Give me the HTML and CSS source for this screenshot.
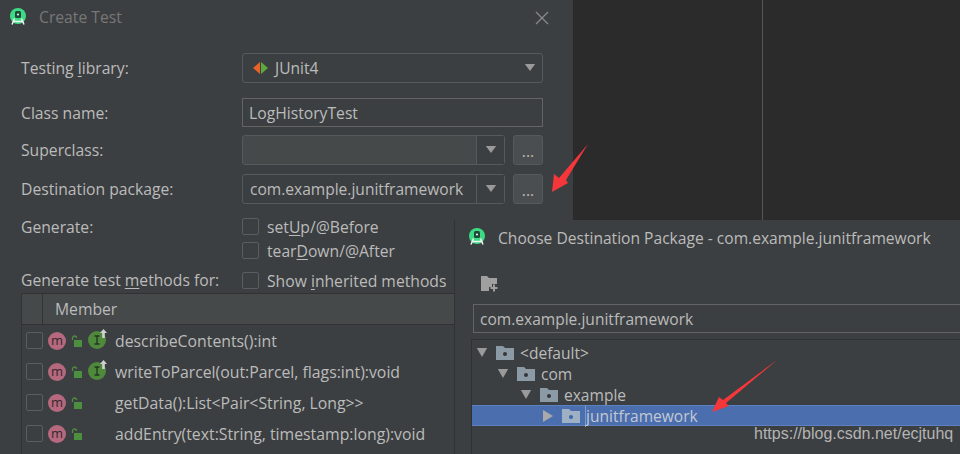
FILE: index.html
```html
<!DOCTYPE html>
<html lang="en">
<head>
<meta charset="utf-8">
<title>Create Test</title>
<link rel="stylesheet" href="styles.css">
</head>
<body>
<svg width="0" height="0" class="defs">
  <defs>
    <symbol id="as" viewBox="0 0 18 18">
      <circle cx="9" cy="8" r="8" fill="#3ddc84"/>
      <rect x="6" y="3" width="6" height="7" rx="1.5" fill="#1f4a3a"/>
      <circle cx="9" cy="6.5" r="1.1" fill="#d8f5e5"/>
      <path d="M5.5 10.5 3 16.5M12.5 10.5 15 16.5M4.5 13.5h9" stroke="#f2f2f2" stroke-width="1.5" fill="none"/>
    </symbol>
    <symbol id="tri" viewBox="0 0 14 9" preserveAspectRatio="none"><path d="M1 0h12l-6 8z" fill="#9a9a9a"/></symbol>
    <symbol id="lock" viewBox="0 0 11 12">
      <path d="M1.5 5V3a2 2 0 0 1 4 0" stroke="#4c8f3f" stroke-width="1.3" fill="none"/>
      <rect x="3" y="5" width="8" height="7" fill="#4c8f3f"/>
    </symbol>
    <symbol id="iface" viewBox="0 0 19 20">
      <circle cx="9" cy="11" r="9" fill="#4f8a3c"/>
      <path d="M6.500 7h5M6.500 15h5M9 7v8" stroke="#23351f" stroke-width="1.300" fill="none"/>
      <path d="M15.500 0l3.500 4h-2.200v5h-2.600v-5h-2.200z" fill="#d0d0d0"/>
    </symbol>
    <symbol id="pkg" viewBox="0 0 18 14">
      <path d="M0 0h7l2 2h9v12H0z" fill="#8c9aa5"/>
      <circle cx="9" cy="8" r="2" fill="#33373a"/>
    </symbol>
    <symbol id="pkgsel" viewBox="0 0 18 14">
      <path d="M0 0h7l2 2h9v12H0z" fill="#9eb0c4"/>
      <circle cx="9" cy="8" r="2" fill="#3f64a8"/>
    </symbol>
  </defs>
</svg>

<main class="desktop">
  <span class="backline"></span>

  <section class="window create">
    <header class="titlebar">
      <svg class="appicon"><use href="#as"/></svg>
      <span class="title-dim">Create Test</span>
      <svg class="close" viewBox="0 0 14 14"><path d="M1 1l12 12M13 1L1 13" stroke="#8a8a8a" stroke-width="1.2" fill="none"/></svg>
    </header>

    <div class="form">
      <div class="frow h30">
        <label class="lbl">Testing <u>l</u>ibrary:</label>
        <div class="select">
          <svg class="junit" viewBox="0 0 15 12"><path d="M7 0v12L0 6z" fill="#e8622a"/><path d="M8 0v12L15 6z" fill="#5fa83d"/></svg>
          <span class="grow">JUnit4</span>
          <svg class="tri"><use href="#tri"/></svg>
        </div>
      </div>
      <div class="frow h29 gap15">
        <label class="lbl">Class name:</label>
        <div class="field">LogHistoryTest</div>
      </div>
      <div class="frow h30 gap8">
        <label class="lbl">Superclass:</label>
        <div class="picker">
          <div class="combo empty"><span class="grow"></span><span class="drop"><svg class="tri"><use href="#tri"/></svg></span></div>
          <button class="dots">...</button>
        </div>
      </div>
      <div class="frow h30 gap9">
        <label class="lbl">Destination package:</label>
        <div class="picker">
          <div class="combo"><span class="grow">com.example.junitframework</span><span class="drop"><svg class="tri"><use href="#tri"/></svg></span></div>
          <button class="dots">...</button>
        </div>
      </div>
    </div>

    <div class="generate">
      <span class="lbl">Generate:</span>
      <div class="checks">
        <div class="check"><i class="box"></i><span>set<u>U</u>p/@Before</span></div>
        <div class="check"><i class="box"></i><span>tear<u>D</u>own/@After</span></div>
      </div>
    </div>

    <div class="methods">
      <span class="lbl">Generate test <u>m</u>ethods for:</span>
      <div class="check"><i class="box"></i><span>Show <u>i</u>nherited methods</span></div>
    </div>

    <div class="table">
      <div class="thead"><span class="th-check"></span><span class="th-member">Member</span></div>
      <div class="row"><i class="box"></i><span class="badge">m</span><svg class="lock"><use href="#lock"/></svg><svg class="iface"><use href="#iface"/></svg><span class="sig">describeContents():int</span></div>
      <div class="row"><i class="box"></i><span class="badge">m</span><svg class="lock"><use href="#lock"/></svg><svg class="iface"><use href="#iface"/></svg><span class="sig">writeToParcel(out:Parcel, flags:int):void</span></div>
      <div class="row"><i class="box"></i><span class="badge">m</span><svg class="lock"><use href="#lock"/></svg><span class="noiface"></span><span class="sig">getData():List&lt;Pair&lt;String, Long&gt;&gt;</span></div>
      <div class="row"><i class="box"></i><span class="badge">m</span><svg class="lock"><use href="#lock"/></svg><span class="noiface"></span><span class="sig">addEntry(text:String, timestamp:long):void</span></div>
    </div>
  </section>

  <section class="window choose">
    <header class="titlebar2">
      <svg class="appicon"><use href="#as"/></svg>
      <span>Choose Destination Package - com.example.junitframework</span>
    </header>
    <div class="toolbar">
      <svg class="newpkg" viewBox="0 0 18 16"><path d="M0 0h6l2 2h8v6h-5v3H8v4H0z" fill="#a0a0a0"/><path d="M13 8.500v7M9.500 12h7" stroke="#a0a0a0" stroke-width="2" fill="none"/></svg>
    </div>
    <div class="pkgfield">com.example.junitframework</div>
    <div class="tree">
      <div class="node l0"><svg class="tw"><use href="#tri"/></svg><svg class="folder"><use href="#pkg"/></svg><span>&lt;default&gt;</span></div>
      <div class="node l1"><svg class="tw"><use href="#tri"/></svg><svg class="folder"><use href="#pkg"/></svg><span>com</span></div>
      <div class="node l2"><svg class="tw"><use href="#tri"/></svg><svg class="folder"><use href="#pkg"/></svg><span>example</span></div>
      <div class="node l3 selected"><svg class="tw closed" viewBox="0 0 12 12"><path d="M1 0l10 6-10 6z" fill="#a9a9a9"/></svg><svg class="folder"><use href="#pkgsel"/></svg><span class="focus">junitframework</span></div>
    </div>
  </section>

  <svg class="arrow-layer" viewBox="0 0 960 454">
    <path d="M588 144 566 180 568 183 552 192 554 174 559 178z" fill="#f5363a"/>
    <path d="M777 360 726 403 729 406 712 412 719 397 723 400z" fill="#f5363a"/>
  </svg>
  <span class="watermark">https://blog.csdn.net/ecjtuhq</span>
</main>
</body>
</html>
```
FILE: styles.css
```css
* { box-sizing: border-box; }
html, body { margin: 0; padding: 0; }
body { width: 960px; height: 454px; overflow: hidden; background: #2b2b2b; font-family: "Open Sans", "Noto Sans", sans-serif; font-size: 15.700px; color: #bbbbbb; }
.defs { position: absolute; }
.desktop { position: relative; width: 960px; height: 454px; overflow: hidden; }
.backline { position: absolute; left: 762px; top: 0; width: 1px; height: 220px; background: #555555; }
.window { position: absolute; background: #3c3f41; overflow: hidden; }
.create { left: 0; top: 0; width: 573px; height: 454px; }
.choose { left: 454px; top: 220px; width: 506px; height: 234px; border-left: 1px solid #2f3132; }

.titlebar { height: 53px; display: flex; align-items: flex-start; padding: 8px 24px 0 9px; }
.appicon { width: 18px; height: 18px; flex: none; }
.title-dim { margin-left: 12px; color: #777777; line-height: 19px; flex: 1; }
.close { width: 14px; height: 14px; margin-top: 3px; }

.form { padding-left: 21px; }
.frow { display: flex; }
.h30 { height: 30px; }
.h29 { height: 29px; }
.gap15 { margin-top: 15px; }
.gap8 { margin-top: 8px; }
.gap9 { margin-top: 9px; }
.lbl { display: flex; align-items: center; white-space: pre; width: 221px; flex: none; }
.lbl u { text-underline-offset: 2px; }

.select { width: 301px; display: flex; align-items: center; border: 1.500px solid #565a5c; border-radius: 3px; padding: 0 6px 0 10px; }
.junit { width: 15px; height: 12px; margin-right: 7px; flex: none; }
.grow { flex: 1; white-space: nowrap; font-size: 15.550px; }
.tri { width: 12px; height: 8px; display: block; }
.field { width: 301px; border: 1.500px solid #646464; padding: 0 6px; display: flex; align-items: center; }
.picker { display: flex; gap: 8px; width: 301px; }
.combo { width: 263px; display: flex; align-items: center; border: 1.500px solid #565a5c; border-radius: 3px; padding-left: 7px; }
.combo.empty { background: #45494a; padding-left: 0; }
.drop { width: 28px; height: 100%; border-left: 1.500px solid #565a5c; background: #3c3f41; display: flex; align-items: center; justify-content: center; flex: none; }
.dots { width: 30px; height: 30px; padding: 0 0 4px; border: 1.500px solid #55595b; border-radius: 3px; background: #4a4e50; color: #bbbbbb; font: inherit; line-height: 1; display: flex; align-items: flex-end; justify-content: center; }

.generate { display: flex; margin-top: 12px; padding-left: 21px; }
.generate > .lbl { height: 22px; }
.checks { display: flex; flex-direction: column; gap: 4px; }
.check { display: flex; align-items: center; height: 20px; white-space: nowrap; }
.check span { padding-top: 2px; }
.check u { text-underline-offset: 2px; }
.box { width: 17px; height: 17px; border: 1.500px solid #5a5e60; border-radius: 2px; background: #3c3f41; display: block; flex: none; margin-right: 8px; }

.methods { display: flex; margin-top: 10px; padding-left: 21px; height: 20px; }

.table { margin: 3px 0 0 21px; border: 1px solid #323232; border-right: 0; height: 170px; }
.thead { height: 31px; display: flex; align-items: center; background: #45494a; border-bottom: 1px solid #323232; }
.th-check { width: 21px; height: 100%; border-right: 1px solid #323232; flex: none; }
.th-member { margin-left: 12px; }
.row { height: 31px; display: flex; align-items: center; padding-left: 4px; white-space: nowrap; }
.row .box { margin-right: 5px; }
.badge { width: 18px; height: 18px; border-radius: 50%; background: #b5687e; color: #33282b; font-size: 13px; line-height: 17px; text-align: center; flex: none; margin-right: 5px; }
.lock { width: 11px; height: 12px; flex: none; }
.iface { width: 19px; height: 20px; margin: -3px 0 0 6px; flex: none; }
.noiface { width: 19px; margin-left: 6px; flex: none; }
.sig { margin-left: 8px; font-size: 15.800px; }

.titlebar2 { height: 36px; display: flex; align-items: center; padding-left: 13px; gap: 12px; white-space: nowrap; font-size: 15.600px; }
.titlebar2 .appicon { margin-top: -2px; }
.toolbar { height: 48px; padding: 20px 0 0 26px; }
.newpkg { width: 18px; height: 16px; display: block; }
.pkgfield { margin-left: 18px; margin-right: -10px; height: 29px; border: 1.500px solid #646464; padding: 0 6px; display: flex; align-items: center; font-size: 15.550px; }
.tree { margin: 6px 0 0 16px; border-top: 1.500px solid #2f3133; border-left: 1.500px solid #2f3133; padding-top: 2px; height: 120px; font-size: 15.550px; }
.node { height: 21px; display: flex; align-items: center; white-space: nowrap; }
.tw { width: 12px; height: 10px; flex: none; }
.folder { width: 18px; height: 14px; flex: none; margin: 0 6px 0 8px; }
.l0 { padding-left: 4px; }
.l1 { padding-left: 25px; }
.l2 { padding-left: 48px; }
.l3 { padding-left: 70px; }
.selected { background: #4b6eaf; border-top: 1px solid #5d80c0; border-bottom: 1px solid #5d80c0; color: #c4c9d2; }
.focus { border-left: 1px solid #7d9ad0; margin-left: -1px; }
.closed { width: 12px; height: 12px; }

.arrow-layer { position: absolute; left: 0; top: 0; width: 960px; height: 454px; pointer-events: none; }
.watermark { position: absolute; left: 754px; top: 424px; font-family: "Liberation Sans", Arial, sans-serif; font-size: 16px; line-height: 20px; color: #b4b4b4; white-space: nowrap; }
```
